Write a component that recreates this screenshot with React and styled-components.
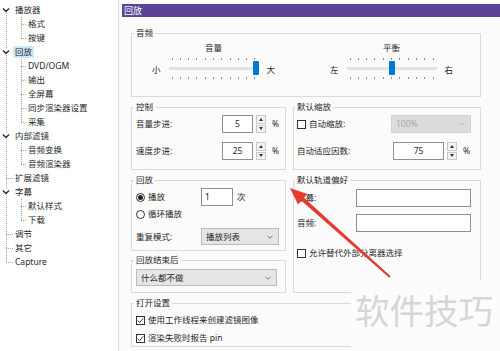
import React from "react";
import styled, { createGlobalStyle } from "styled-components";

const GlobalStyle = createGlobalStyle`
  html, body { margin: 0; padding: 0; }
  body {
    width: 500px;
    height: 351px;
    overflow: hidden;
    background: #fbfbfb;
    font-family: "Noto Sans", "Noto Sans CJK SC", sans-serif;
    font-size: 8.5px;
    line-height: 12px;
    color: #1f1f1f;
  }
`;

const tree = [
  { label: "播放器", children: ["格式", "按键"] },
  { label: "回放", selected: true, children: ["DVD/OGM", "输出", "全屏幕", "同步渲染器设置", "采集"] },
  { label: "内部滤镜", children: ["音频变换", "音频渲染器"] },
  { label: "扩展滤镜" },
  { label: "字幕", children: ["默认样式", "下载"] },
  { label: "调节" },
  { label: "其它" },
  { label: "Capture" },
];

const Window = styled.div`
  position: relative;
  display: flex;
  width: 500px;
  height: 351px;
  overflow: hidden;
`;

/* ---------- tree ---------- */

const Tree = styled.div`
  flex: none;
  width: 118px;
  padding-top: 3px;
  background: #fff;
  border-right: 1px solid #d6d6d6;
`;

const TreeList = styled.div`
  position: relative;
  &::before {
    content: "";
    position: absolute;
    left: 6px;
    top: 7px;
    bottom: 7px;
    border-left: 1px dotted #a3a3a3;
  }
`;

const ChildList = styled.div`
  position: relative;
  &::before {
    content: "";
    position: absolute;
    left: 21px;
    top: 0;
    bottom: 7px;
    border-left: 1px dotted #a3a3a3;
  }
`;

const Row = styled.div`
  position: relative;
  display: flex;
  align-items: center;
  height: 14px;
  padding-left: ${(p) => p.$depth * 13}px;
`;

const Slot = styled.span`
  position: relative;
  flex: none;
  width: 13px;
  height: 14px;
  display: flex;
  align-items: center;
  &::after {
    content: "";
    display: ${(p) => (p.$leaf ? "block" : "none")};
    position: absolute;
    left: ${(p) => (p.$depth ? 8 : 6)}px;
    width: ${(p) => (p.$depth ? 5 : 7)}px;
    top: 7px;
    border-top: 1px dotted #a3a3a3;
  }
`;

/* expand arrow "∨" */
const Toggle = styled.svg`
  position: relative;
  z-index: 2;
  flex: none;
  display: block;
  margin-left: 2px;
  background: #fff;
`;

const NodeLabel = styled.span`
  padding: 0 2px;
  line-height: 12px;
  white-space: nowrap;
  background: ${(p) => (p.$selected ? "#cce8ff" : "transparent")};
`;

function TreeNode({ node }) {
  const hasKids = !!node.children;
  return (
    <>
      <Row $depth={0}>
        <Slot $leaf={!hasKids} $depth={0}>
          {hasKids ? (
            <Toggle width="8" height="6" viewBox="0 0 8 6">
              <path d="M1 1.5 L4 4.5 L7 1.5" fill="none" stroke="#2a2a2a" strokeWidth="1.4" />
            </Toggle>
          ) : null}
        </Slot>
        <NodeLabel $selected={node.selected}>{node.label}</NodeLabel>
      </Row>
      {hasKids && (
        <ChildList>
          {node.children.map((c) => (
            <Row key={c} $depth={1}>
              <Slot $leaf $depth={1} />
              <NodeLabel>{c}</NodeLabel>
            </Row>
          ))}
        </ChildList>
      )}
    </>
  );
}

/* ---------- main page ---------- */

const Main = styled.div`
  flex: 1;
  min-width: 0;
  padding: 4px 0 0 3px;
`;

const Header = styled.div`
  height: 13px;
  line-height: 13px;
  padding-left: 2px;
  background: #5b4397;
  color: #fff;
  font-size: 9px;
`;

const Content = styled.div`
  display: grid;
  grid-template-columns: 155px 188px;
  column-gap: 7px;
  row-gap: 4px;
  padding: 10px 0 0 9px;
`;

const Stack = styled.div`
  display: flex;
  flex-direction: column;
  gap: 3px;
`;

const Group = styled.fieldset`
  margin: 0;
  min-width: 0;
  padding: ${(p) => p.$pad || "2px 4px 9px"};
  border: 1px solid #dadada;
  grid-column: ${(p) => (p.$wide ? "1 / -1" : "auto")};
`;

const Legend = styled.legend`
  margin-left: -2px;
  padding: 0 2px;
  line-height: 12px;
  color: #262626;
`;

/* sliders */

const SliderRow = styled.div`
  display: flex;
  gap: 55px;
  padding-left: 16px;
`;

const SliderBlock = styled.div`
  display: flex;
  flex-direction: column;
  align-items: center;
`;

const SliderTitle = styled.div`
  line-height: 12px;
  margin-bottom: 2px;
`;

const SliderLine = styled.div`
  display: flex;
  align-items: center;
  gap: 8px;
`;

const SideLabel = styled.span`
  margin-top: 3px;
`;

const SliderBody = styled.div`
  width: ${(p) => p.$w}px;
  height: 24px;
  display: flex;
  flex-direction: column;
`;

const Ticks = styled.div`
  display: flex;
  justify-content: space-between;
  height: 2px;
  margin-top: 2px;
  padding: 0 3px;
  span {
    width: 1px;
    height: 2px;
    background: #8d8d8d;
  }
`;

const TrackArea = styled.div`
  position: relative;
  height: 14px;
  margin-top: 1px;
`;

const Track = styled.div`
  position: absolute;
  left: 0;
  right: 0;
  top: 6px;
  height: 3px;
  background: #e2e2e2;
`;

const Thumb = styled.div`
  position: absolute;
  top: 0;
  width: 6px;
  height: 14px;
  border-radius: 1px;
  background: #0078d7;
`;

function Slider({ title, left, right, value, width }) {
  const ticks = Array.from({ length: 11 }, (_, i) => <span key={i} />);
  return (
    <SliderBlock>
      <SliderTitle>{title}</SliderTitle>
      <SliderLine>
        <SideLabel>{left}</SideLabel>
        <SliderBody $w={width}>
          <Ticks>{ticks}</Ticks>
          <TrackArea>
            <Track />
            <Thumb style={{ left: (value / 100) * (width - 6) }} />
          </TrackArea>
          <Ticks>{ticks}</Ticks>
        </SliderBody>
        <SideLabel>{right}</SideLabel>
      </SliderLine>
    </SliderBlock>
  );
}

/* form rows */

const FieldRow = styled.div`
  display: flex;
  align-items: center;
  height: ${(p) => p.$h || 18}px;
  margin-top: ${(p) => p.$mt || 0}px;
`;

const FieldLabel = styled.span`
  flex: none;
  width: ${(p) => p.$w}px;
  white-space: nowrap;
`;

const Choice = styled.label`
  flex: none;
  display: flex;
  align-items: center;
  gap: 3px;
  width: ${(p) => (p.$w ? `${p.$w}px` : "auto")};
  white-space: nowrap;
`;

const NumBox = styled.div`
  flex: none;
  width: ${(p) => p.$w}px;
  height: 18px;
  box-sizing: border-box;
  border: 1px solid #8e8e8e;
  background: #fff;
  display: flex;
  align-items: center;
  justify-content: ${(p) => (p.$left ? "flex-start" : "center")};
  padding: ${(p) => (p.$left ? "0 3px" : "0")};
`;

const Spinner = styled.div`
  display: flex;
  flex-direction: column;
  gap: 1px;
  margin-left: 3px;
`;

const SpinBtn = styled.div`
  width: 10px;
  height: 8.5px;
  box-sizing: border-box;
  border: 1px solid #c8c8c8;
  background: #f5f5f5;
  display: flex;
  align-items: center;
  justify-content: center;
  &::after {
    content: "";
    border-left: 2px solid transparent;
    border-right: 2px solid transparent;
    ${(p) => (p.$down ? "border-top: 3px solid #333;" : "border-bottom: 3px solid #333;")}
  }
`;

const Unit = styled.span`
  margin-left: ${(p) => p.$ml || 6}px;
`;

const Combo = styled.div`
  flex: none;
  width: ${(p) => p.$w}px;
  height: ${(p) => p.$h || 17}px;
  box-sizing: border-box;
  border: 1px solid ${(p) => (p.$disabled ? "#d2d2d2" : "#bcbcbc")};
  background: ${(p) => (p.$disabled ? "#dcdcdc" : "#e5e5e5")};
  color: ${(p) => (p.$disabled ? "#a5a5a5" : "#1f1f1f")};
  display: flex;
  align-items: center;
  justify-content: space-between;
  padding: 0 5px 0 4px;
`;

const TextBox = styled.div`
  flex: none;
  width: ${(p) => p.$w}px;
  height: 18px;
  box-sizing: border-box;
  border: 1px solid #8e8e8e;
  background: #fff;
`;

const Box = styled.span`
  flex: none;
  width: 9px;
  height: 9px;
  box-sizing: border-box;
  border: 1px solid #333;
  border-radius: ${(p) => (p.$round ? "50%" : "0")};
  background: #fff;
  display: flex;
  align-items: center;
  justify-content: center;
`;

const Dot = styled.span`
  width: 5px;
  height: 5px;
  border-radius: 50%;
  background: #222;
`;

function Radio({ on }) {
  return <Box $round>{on && <Dot />}</Box>;
}

function Check({ on }) {
  return (
    <Box>
      {on && (
        <svg width="7" height="7" viewBox="0 0 7 7">
          <polyline points="0.8,3.6 2.7,5.5 6.3,1.3" fill="none" stroke="#222" strokeWidth="0.9" />
        </svg>
      )}
    </Box>
  );
}

function ComboArrow({ light }) {
  return (
    <svg width="6" height="4" viewBox="0 0 6 4">
      <polyline points="0.5,0.7 3,3.2 5.5,0.7" fill="none" stroke={light ? "#b3b3b3" : "#6d6d6d"} strokeWidth="0.9" />
    </svg>
  );
}

function Spin() {
  return (
    <Spinner>
      <SpinBtn />
      <SpinBtn $down />
    </Spinner>
  );
}

/* overlays */

const Watermark = styled.div`
  position: absolute;
  right: 0;
  bottom: 0;
  width: 149px;
  height: 71px;
  box-sizing: border-box;
  padding: 12px 0 0 4px;
  background: #fcfcfc;
  font-family: "Noto Sans CJK SC", sans-serif;
  font-size: 34.5px;
  line-height: 34px;
  color: #d6d6d6;
  white-space: nowrap;
`;

const ArrowLayer = styled.svg`
  position: absolute;
  left: 0;
  top: 0;
  pointer-events: none;
`;

export default function App() {
  return (
    <>
      <GlobalStyle />
      <Window>
        <Tree>
          <TreeList>
            {tree.map((n) => (
              <TreeNode key={n.label} node={n} />
            ))}
          </TreeList>
        </Tree>

        <Main>
          <Header>回放</Header>
          <Content>
            <Group $wide $pad="3px 4px 16px">
              <Legend>音频</Legend>
              <SliderRow>
                <Slider title="音量" left="小" right="大" value={100} width={90} />
                <Slider title="平衡" left="左" right="右" value={50} width={90} />
              </SliderRow>
            </Group>

            <Group>
              <Legend>控制</Legend>
              <FieldRow>
                <FieldLabel $w={86}>音量步进:</FieldLabel>
                <NumBox $w={31}>5</NumBox>
                <Spin />
                <Unit>%</Unit>
              </FieldRow>
              <FieldRow $mt={9}>
                <FieldLabel $w={86}>速度步进:</FieldLabel>
                <NumBox $w={31}>25</NumBox>
                <Spin />
                <Unit>%</Unit>
              </FieldRow>
            </Group>

            <Group $pad="2px 3px 9px">
              <Legend>默认缩放</Legend>
              <FieldRow>
                <Choice $w={94}>
                  <Check />
                  自动缩放:
                </Choice>
                <Combo $w={80} $h={18} $disabled>
                  100%
                  <ComboArrow light />
                </Combo>
              </FieldRow>
              <FieldRow $mt={9}>
                <FieldLabel $w={96}>自动适应因数:</FieldLabel>
                <NumBox $w={51}>75</NumBox>
                <Spin />
                <Unit>%</Unit>
              </FieldRow>
            </Group>

            <Stack>
              <Group $pad="2px 4px 5px">
                <Legend>回放</Legend>
                <FieldRow>
                  <Choice $w={65}>
                    <Radio on />
                    播放
                  </Choice>
                  <NumBox $w={32} $left>
                    1
                  </NumBox>
                  <Unit $ml={4}>次</Unit>
                </FieldRow>
                <FieldRow $h={16}>
                  <Choice>
                    <Radio />
                    循环播放
                  </Choice>
                </FieldRow>
                <FieldRow $mt={6} $h={17}>
                  <FieldLabel $w={65}>重复模式:</FieldLabel>
                  <Combo $w={78}>
                    播放列表
                    <ComboArrow />
                  </Combo>
                </FieldRow>
              </Group>
              <Group $pad="3px 6px 6px 4px">
                <Legend>回放结束后</Legend>
                <FieldRow $h={17}>
                  <Combo $w={141}>
                    什么都不做
                    <ComboArrow />
                  </Combo>
                </FieldRow>
              </Group>
            </Stack>

            <Group $pad="3px 3px 0">
              <Legend>默认轨道偏好</Legend>
              <FieldRow>
                <FieldLabel $w={59}>字幕:</FieldLabel>
                <TextBox $w={115} />
              </FieldRow>
              <FieldRow $mt={7}>
                <FieldLabel $w={59}>音频:</FieldLabel>
                <TextBox $w={115} />
              </FieldRow>
              <FieldRow $mt={14} $h={14}>
                <Choice>
                  <Check />
                  允许替代外部分离器选择
                </Choice>
              </FieldRow>
            </Group>

            <Group $wide $pad="3px 4px 0">
              <Legend>打开设置</Legend>
              <FieldRow $h={16}>
                <Choice>
                  <Check on />
                  使用工作线程来创建滤镜图像
                </Choice>
              </FieldRow>
              <FieldRow $h={16} $mt={2}>
                <Choice>
                  <Check on />
                  渲染失败时报告 pin
                </Choice>
              </FieldRow>
            </Group>
          </Content>
        </Main>

        <Watermark>软件技巧</Watermark>

        <ArrowLayer width="500" height="351" viewBox="0 0 500 351">
          <polygon
            points="390.7,276.3 304,197.8 307.4,194.1 290,188 298,204.5 301.4,200.8 389.3,277.7"
            fill="#e53a2f"
          />
        </ArrowLayer>
      </Window>
    </>
  );
}
